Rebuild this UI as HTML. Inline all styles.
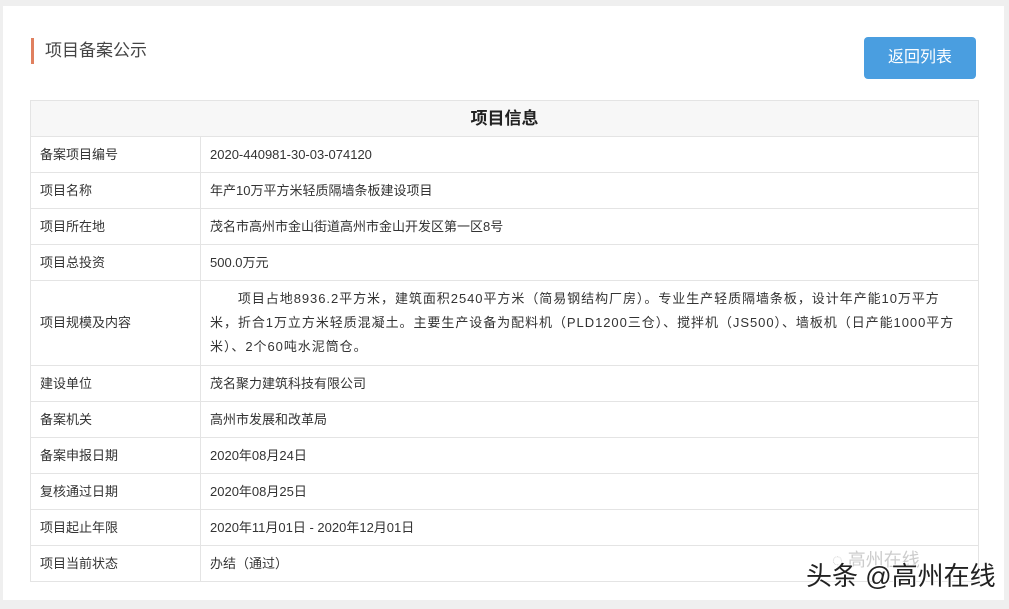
<!DOCTYPE html>
<html><head><meta charset="utf-8"><style>
body{margin:0;width:1009px;height:609px;background:#efefef;font-family:"Liberation Sans","Noto Sans CJK SC",sans-serif;position:relative;overflow:hidden}
.card{position:absolute;left:3px;top:6px;width:1001px;height:594px;background:#fff}
.title{position:absolute;left:31px;top:38px;height:26px;border-left:3px solid #e0805f;padding-left:11px;font-size:17px;color:#444;line-height:26px}
.btn{position:absolute;left:864px;top:37px;width:112px;height:42px;background:#4a9ee0;border-radius:4px;color:#fff;font-size:16px;text-align:center;line-height:42px}
table{position:absolute;left:30px;top:100px;width:949px;border-collapse:collapse;font-size:13px;color:#333;table-layout:fixed}
td{border:1px solid #e4e4e4;height:36px;padding:0 9px;box-sizing:border-box;line-height:16px;overflow:hidden}
th{background:#f7f7f7;border:1px solid #e4e4e4;height:36px;font-size:17px;font-weight:bold;color:#222;box-sizing:border-box;padding:0;line-height:20px}
.wm{position:absolute;left:806px;top:556px;font-size:26px;color:#222;text-shadow:1px 1px 0 #fff,-1px -1px 0 #fff}
.wm2{position:absolute;left:832px;top:546px;font-size:18px;color:#ccc}
.big{line-height:24px;white-space:nowrap;letter-spacing:0.95px}
</style></head><body>
<div class="card"></div>
<div class="title">项目备案公示</div>
<div class="btn">返回列表</div>
<table>
<colgroup><col style="width:170px"><col></colgroup>
<tr><th colspan="2">项目信息</th></tr>
<tr><td>备案项目编号</td><td>2020-440981-30-03-074120</td></tr>
<tr><td>项目名称</td><td>年产10万平方米轻质隔墙条板建设项目</td></tr>
<tr><td>项目所在地</td><td>茂名市高州市金山街道高州市金山开发区第一区8号</td></tr>
<tr><td>项目总投资</td><td>500.0万元</td></tr>
<tr><td style="height:85px">项目规模及内容</td><td class="big">&emsp;&emsp;项目占地8936.2平方米，建筑面积2540平方米（简易钢结构厂房）。专业生产轻质隔墙条板，设计年产能10万平方<br>米，折合1万立方米轻质混凝土。主要生产设备为配料机（PLD1200三仓）、搅拌机（JS500）、墙板机（日产能1000平方<br>米）、2个60吨水泥筒仓。</td></tr>
<tr><td>建设单位</td><td>茂名聚力建筑科技有限公司</td></tr>
<tr><td>备案机关</td><td>高州市发展和改革局</td></tr>
<tr><td>备案申报日期</td><td>2020年08月24日</td></tr>
<tr><td>复核通过日期</td><td>2020年08月25日</td></tr>
<tr><td>项目起止年限</td><td>2020年11月01日 - 2020年12月01日</td></tr>
<tr><td>项目当前状态</td><td>办结（通过）</td></tr>
</table>
<div class="wm2">◌ 高州在线</div>
<div class="wm">头条 @高州在线</div>
</body></html>
